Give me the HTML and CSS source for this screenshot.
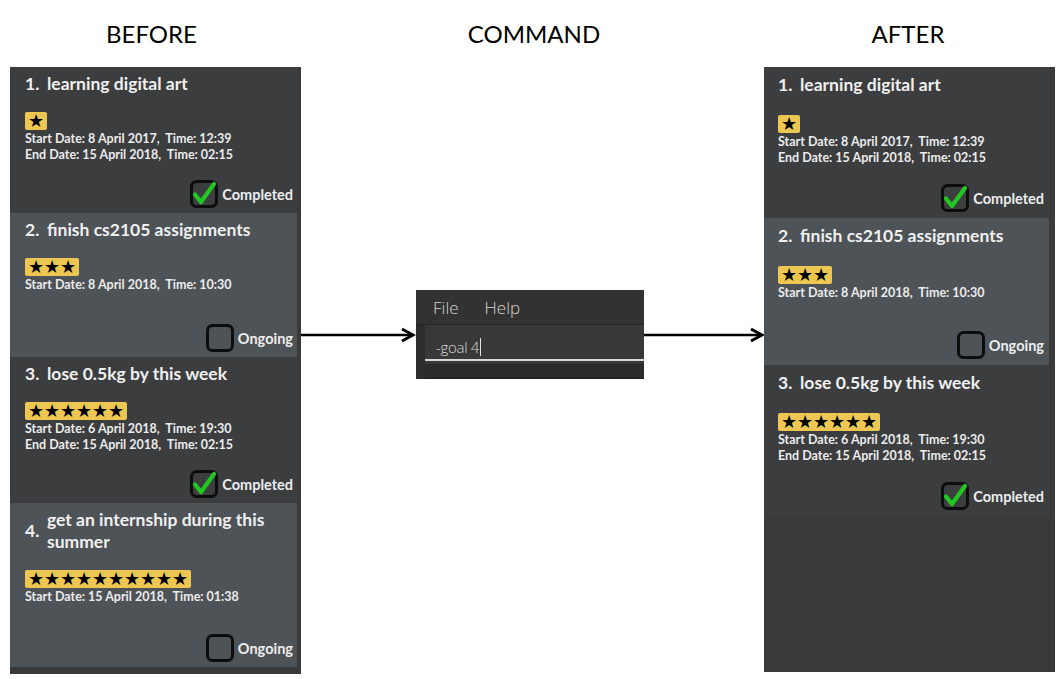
FILE: index.html
```html
<!DOCTYPE html>
<html>
<head>
<meta charset="utf-8">
<link rel="stylesheet" href="styles.css">
</head>
<body>
<div class="page">
  <div class="headings">
    <div class="heading h-before">BEFORE</div>
    <div class="heading h-command">COMMAND</div>
    <div class="heading h-after">AFTER</div>
  </div>
  <div class="stage">
    <div class="panel before">
      <div class="card dark">
        <div class="title"><span class="num">1.</span><span class="name">learning digital art</span></div>
        <div class="badge"><span class="star">★</span></div>
        <div class="dates">Start Date: 8 April 2017,  Time: 12:39
End Date: 15 April 2018,  Time: 02:15</div>
        <div class="status"><svg class="box" width="28" height="28" viewBox="0 0 28 28"><rect x="1.5" y="1.5" width="25" height="25" rx="5" fill="none" stroke="#0d0d0d" stroke-width="3"/><path d="M5 14.5 L11 22 L24 4" fill="none" stroke="#22c722" stroke-width="4.2" stroke-linecap="round" stroke-linejoin="round"/></svg><span>Completed</span></div>
      </div>
      <div class="card light">
        <div class="title"><span class="num">2.</span><span class="name">finish cs2105 assignments</span></div>
        <div class="badge"><span class="star">★</span><span class="star">★</span><span class="star">★</span></div>
        <div class="dates">Start Date: 8 April 2018,  Time: 10:30</div>
        <div class="status"><svg class="box" width="28" height="28" viewBox="0 0 28 28"><rect x="1.5" y="1.5" width="25" height="25" rx="5" fill="none" stroke="#0d0d0d" stroke-width="3"/></svg><span>Ongoing</span></div>
      </div>
      <div class="card dark">
        <div class="title"><span class="num">3.</span><span class="name">lose 0.5kg by this week</span></div>
        <div class="badge"><span class="star">★</span><span class="star">★</span><span class="star">★</span><span class="star">★</span><span class="star">★</span><span class="star">★</span></div>
        <div class="dates">Start Date: 6 April 2018,  Time: 19:30
End Date: 15 April 2018,  Time: 02:15</div>
        <div class="status"><svg class="box" width="28" height="28" viewBox="0 0 28 28"><rect x="1.5" y="1.5" width="25" height="25" rx="5" fill="none" stroke="#0d0d0d" stroke-width="3"/><path d="M5 14.5 L11 22 L24 4" fill="none" stroke="#22c722" stroke-width="4.2" stroke-linecap="round" stroke-linejoin="round"/></svg><span>Completed</span></div>
      </div>
      <div class="card light tall">
        <div class="title"><span class="num">4.</span><span class="name">get an internship during this summer</span></div>
        <div class="badge"><span class="star">★</span><span class="star">★</span><span class="star">★</span><span class="star">★</span><span class="star">★</span><span class="star">★</span><span class="star">★</span><span class="star">★</span><span class="star">★</span><span class="star">★</span></div>
        <div class="dates">Start Date: 15 April 2018,  Time: 01:38</div>
        <div class="status"><svg class="box" width="28" height="28" viewBox="0 0 28 28"><rect x="1.5" y="1.5" width="25" height="25" rx="5" fill="none" stroke="#0d0d0d" stroke-width="3"/></svg><span>Ongoing</span></div>
      </div>
    </div>

    <div class="arrow arrow-left">
      <svg width="115" height="20" viewBox="0 0 115 20"><line x1="0" y1="10" x2="112" y2="10" stroke="#000" stroke-width="2.5"/><polyline points="101,4 112,10 101,16" fill="none" stroke="#000" stroke-width="3"/></svg>
    </div>

    <div class="command">
      <div class="menubar"><span>File</span><span>Help</span></div>
      <div class="field"><span class="cmd">-goal 4</span><span class="caret"></span></div>
      <div class="rest"></div>
    </div>

    <div class="arrow arrow-right">
      <svg width="120" height="20" viewBox="0 0 120 20"><line x1="0" y1="10" x2="118" y2="10" stroke="#000" stroke-width="2.5"/><polyline points="107,4 118,10 107,16" fill="none" stroke="#000" stroke-width="3"/></svg>
    </div>

    <div class="panel after">
      <div class="card dark">
        <div class="title"><span class="num">1.</span><span class="name">learning digital art</span></div>
        <div class="badge"><span class="star">★</span></div>
        <div class="dates">Start Date: 8 April 2017,  Time: 12:39
End Date: 15 April 2018,  Time: 02:15</div>
        <div class="status"><svg class="box" width="28" height="28" viewBox="0 0 28 28"><rect x="1.5" y="1.5" width="25" height="25" rx="5" fill="none" stroke="#0d0d0d" stroke-width="3"/><path d="M5 14.5 L11 22 L24 4" fill="none" stroke="#22c722" stroke-width="4.2" stroke-linecap="round" stroke-linejoin="round"/></svg><span>Completed</span></div>
      </div>
      <div class="card light">
        <div class="title"><span class="num">2.</span><span class="name">finish cs2105 assignments</span></div>
        <div class="badge"><span class="star">★</span><span class="star">★</span><span class="star">★</span></div>
        <div class="dates">Start Date: 8 April 2018,  Time: 10:30</div>
        <div class="status"><svg class="box" width="28" height="28" viewBox="0 0 28 28"><rect x="1.5" y="1.5" width="25" height="25" rx="5" fill="none" stroke="#0d0d0d" stroke-width="3"/></svg><span>Ongoing</span></div>
      </div>
      <div class="card dark">
        <div class="title"><span class="num">3.</span><span class="name">lose 0.5kg by this week</span></div>
        <div class="badge"><span class="star">★</span><span class="star">★</span><span class="star">★</span><span class="star">★</span><span class="star">★</span><span class="star">★</span></div>
        <div class="dates">Start Date: 6 April 2018,  Time: 19:30
End Date: 15 April 2018,  Time: 02:15</div>
        <div class="status"><svg class="box" width="28" height="28" viewBox="0 0 28 28"><rect x="1.5" y="1.5" width="25" height="25" rx="5" fill="none" stroke="#0d0d0d" stroke-width="3"/><path d="M5 14.5 L11 22 L24 4" fill="none" stroke="#22c722" stroke-width="4.2" stroke-linecap="round" stroke-linejoin="round"/></svg><span>Completed</span></div>
      </div>
    </div>
  </div>
</div>
</body>
</html>
```

FILE: styles.css
```css
html, body {
  margin: 0;
  padding: 0;
  background: #ffffff;
}

.page {
  width: 1064px;
  height: 679px;
  padding-left: 10px;
  box-sizing: border-box;
}

.headings {
  display: grid;
  grid-template-columns: 291px 115px 228px 120px 291px;
  height: 67px;
  align-items: center;
}

.heading {
  font-family: Lato, "Open Sans", sans-serif;
  font-size: 24px;
  color: #000;
  text-align: center;
  padding-bottom: 1px;
}

.h-before { grid-column: 1; padding-right: 8px; }
.h-command { grid-column: 3; padding-left: 8px; }
.h-after { grid-column: 5; padding-right: 3px; }

.stage {
  display: grid;
  grid-template-columns: 291px 115px 228px 120px 291px;
  align-items: start;
}

.panel {
  background: #3a3a3a;
  display: flex;
  flex-direction: column;
  box-sizing: border-box;
}

.panel.before {
  height: 607px;
  padding-right: 4px;
}

.panel.after {
  height: 605px;
  padding-right: 6px;
}

.card {
  display: flex;
  flex-direction: column;
  box-sizing: border-box;
  min-height: 146px;
  padding: 6px 4px 5px 15px;
  color: #f2f2f2;
  font-family: Lato, "Open Sans", sans-serif;
}

.card.dark { background: #3c3d3f; }
.card.light { background: #4e5357; }

.before .card.light {
  min-height: 144px;
}

.before .card.tall {
  min-height: 164px;
}

.after .card {
  padding: 7px 5px 6px 14px;
}

.after .card.dark {
  min-height: 151px;
}

.after .card.light {
  min-height: 147px;
}

.title {
  display: flex;
  align-items: center;
  font-size: 17.5px;
  font-weight: 700;
  line-height: 22px;
  color: #f0f0f0;
}

.num {
  flex: none;
  width: 22px;
}

.name {
  flex: 1;
}

.badge {
  align-self: flex-start;
  display: flex;
  align-items: center;
  height: 18px;
  margin-top: 17px;
  padding: 0 3px;
  background: #eec752;
  border-radius: 2px;
}

.after .badge {
  margin-top: 19px;
}

.star {
  display: block;
  width: 16px;
  text-align: center;
  font-family: "DejaVu Sans", sans-serif;
  font-size: 18px;
  line-height: 18px;
  color: #000;
}

.dates {
  white-space: pre;
  font-size: 12.5px;
  font-weight: 700;
  line-height: 15.5px;
  color: #ececec;
  margin-top: 1px;
}

.after .dates {
  line-height: 16px;
}

.status {
  margin-top: auto;
  align-self: flex-end;
  display: flex;
  align-items: center;
  gap: 4px;
  font-size: 14.5px;
  font-weight: 700;
  color: #ededed;
}

.box {
  display: block;
}

.arrow {
  margin-top: 258px;
}

.arrow svg {
  display: block;
}

.command {
  margin-top: 223px;
  height: 89px;
  background: #2d2d2d;
  display: flex;
  flex-direction: column;
  font-family: "Open Sans", sans-serif;
}

.menubar {
  height: 34px;
  display: flex;
  align-items: center;
  gap: 26px;
  padding-left: 17px;
  background: #323232;
  border-bottom: 1px solid #262626;
  color: #d4d4d4;
  font-size: 17px;
  font-weight: 300;
}

.field {
  height: 36px;
  margin-left: 9px;
  display: flex;
  align-items: center;
  padding-left: 11px;
  padding-top: 9px;
  box-sizing: border-box;
  border-bottom: 2px solid #d9d9d9;
  background: #383838;
  color: #dcdcdc;
  font-size: 15px;
  font-weight: 300;
}

.cmd {
  letter-spacing: -0.3px;
}

.caret {
  display: inline-block;
  width: 1px;
  height: 18px;
  background: #e0e0e0;
  margin-left: 1px;
}

.rest {
  flex: 1;
  margin-left: 9px;
  border-top: 3px solid #383838;
  border-bottom: 1px solid #1e1e1e;
  background: #2a2a2a;
}
```
